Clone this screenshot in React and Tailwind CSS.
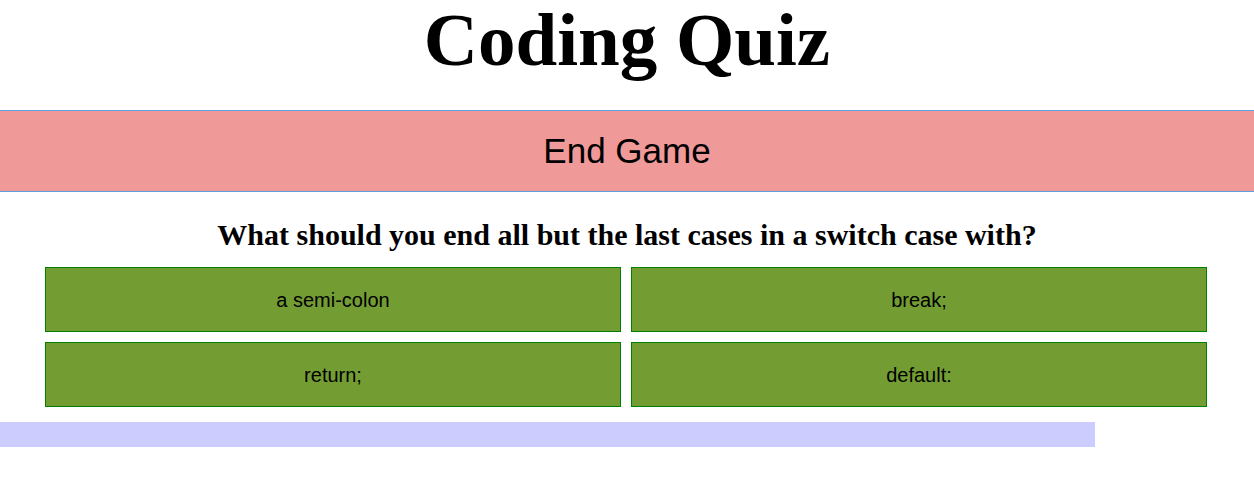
import React from "react";

const answers = ["a semi-colon", "break;", "return;", "default:"];

const App = () => {
  const timeLeft = 1095 / 1254; // fraction of the timer bar still showing

  return (
    <div className="min-h-screen bg-white text-black">
      <h1 className="text-center font-bold text-[75px] leading-[80px] h-[110px] font-['Liberation_Serif',serif]">
        Coding Quiz
      </h1>
      <div className="h-[82px] bg-[#f09999] border-y border-[#5b9fe0] flex items-center justify-center">
        <span className="text-[35px] font-['Liberation_Sans',sans-serif]">End Game</span>
      </div>
      <h2 className="text-center font-bold text-[30px] leading-[34px] pt-[26px] pb-[15px] font-['Liberation_Serif',serif]">
        What should you end all but the last cases in a switch case with?
      </h2>
      <div className="grid grid-cols-2 gap-[10px] pl-[45px] pr-[47px]">
        {answers.map((answer) => (
          <button
            key={answer}
            className="h-[65px] bg-[#739d33] border border-[#008000] text-[20px] font-['Liberation_Sans',sans-serif]"
          >
            {answer}
          </button>
        ))}
      </div>
      <div className="mt-[15px] h-[25px]">
        <div className="h-full bg-[#ccccff]" style={{ width: `${timeLeft * 100}%` }}></div>
      </div>
    </div>
  );
};

export default App;
